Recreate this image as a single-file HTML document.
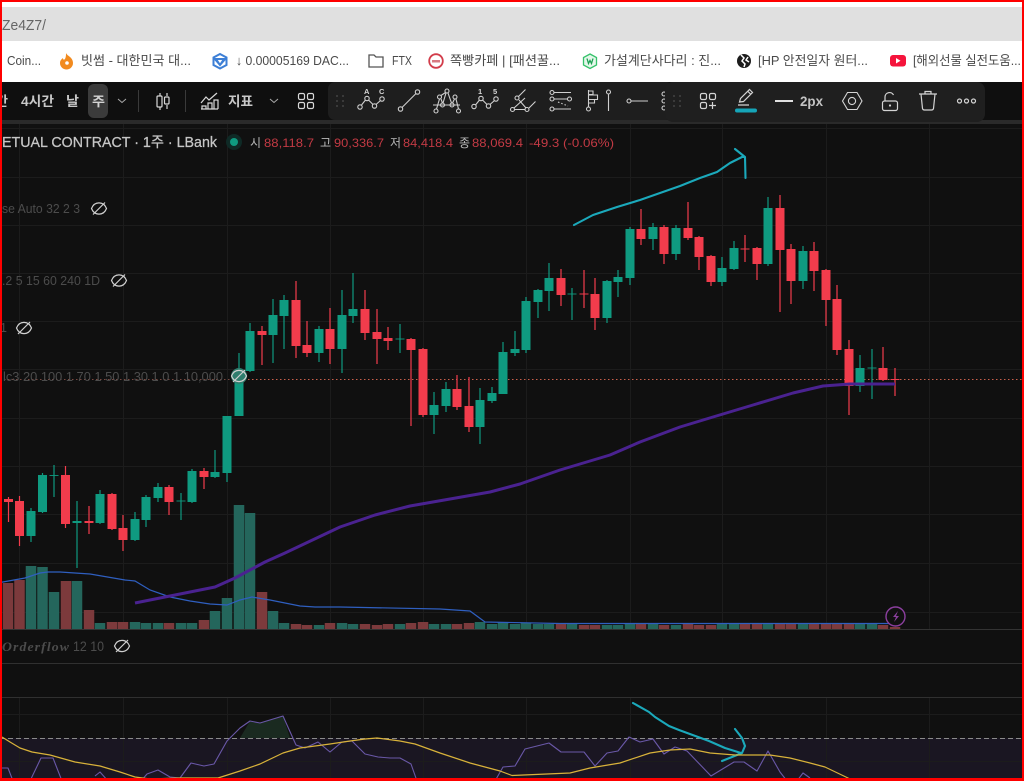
<!DOCTYPE html>
<html lang="ko">
<head>
<meta charset="utf-8">
<title>Chart</title>
<style>
html,body{margin:0;padding:0;background:#101010;width:1024px;height:781px;overflow:hidden}
svg{display:block;font-family:"Liberation Sans","Noto Sans CJK KR",sans-serif}
</style>
</head>
<body>
<svg width="1024" height="781" viewBox="0 0 1024 781" xmlns="http://www.w3.org/2000/svg">
<!-- base -->
<rect width="1024" height="781" fill="#101010"/>
<rect x="0" y="0" width="1024" height="41" fill="#fff"/>
<rect x="0" y="7" width="1024" height="34" fill="#e0e0e0"/>
<rect x="0" y="41" width="1024" height="41" fill="#fff"/>
<rect x="0" y="82" width="1024" height="38" fill="#0f0f0f"/>
<rect x="0" y="120" width="1024" height="4" fill="#2a2a2a"/>

<text x="2" y="30" font-size="15" fill="#666" textLength="44" lengthAdjust="spacingAndGlyphs">Ze4Z7/</text>

<!-- bookmarks -->
<g font-size="13" fill="#4a4a4a">
<text x="7" y="65" textLength="34" lengthAdjust="spacingAndGlyphs">Coin...</text>
<text x="81" y="65" textLength="110" lengthAdjust="spacingAndGlyphs">빗썸 - 대한민국 대...</text>
<text x="236" y="65" textLength="113" lengthAdjust="spacingAndGlyphs">↓ 0.00005169 DAC...</text>
<text x="392" y="65" textLength="20" lengthAdjust="spacingAndGlyphs">FTX</text>
<text x="450" y="65" textLength="110" lengthAdjust="spacingAndGlyphs">쪽빵카페 | [패션꿀...</text>
<text x="604" y="65" textLength="117" lengthAdjust="spacingAndGlyphs">가설계단사다리 : 진...</text>
<text x="758" y="65" textLength="110" lengthAdjust="spacingAndGlyphs">[HP 안전일자 원터...</text>
<text x="913" y="65" textLength="108" lengthAdjust="spacingAndGlyphs">[해외선물 실전도움...</text>
</g>
<!-- favicons -->
<path d="M66 53c1 3 7 4 7 10a6.500 6.500 0 0 1-13 0c0-3 2-4 3-5 0 2 1 2 2 1 1-2 1-4 1-6z" fill="#f28a1e"/>
<circle cx="67" cy="63" r="1.800" fill="#fff"/>
<g fill="none" stroke="#3d7fd6" stroke-width="2"><path d="M220 54l6.500 3.500v7.500l-6.500 3.500-6.500-3.500v-7.500z"/><path d="M216 59h8l-4 6zM213.500 57.500l6.500 7.500 6.500-7.500"/></g>
<path d="M369 55h5l2 2h7v10h-14z" fill="none" stroke="#555" stroke-width="1.300"/>
<circle cx="436" cy="61" r="6.800" fill="#fff" stroke="#d23c4a" stroke-width="1.800"/><rect x="432" y="60" width="8" height="2.500" fill="#d87a82"/>
<path d="M590 54l6.500 3.500v7.500l-6.500 3.500-6.500-3.500v-7.500z" fill="#e4f7ea" stroke="#35c26a" stroke-width="1.300"/><path d="M587 58.500l1.500 5 1.500-3 1.500 3 1.500-5" fill="none" stroke="#1ba052" stroke-width="1.300"/>
<circle cx="744" cy="61" r="7" fill="#1c1c1c"/><path d="M741 55l3 3-2 3 3 3-1 3M748 57l-2 3 3 2" fill="none" stroke="#fff" stroke-width="1.500"/>
<rect x="890" y="55" width="16" height="11.500" rx="3" fill="#f5143c"/><path d="M896 58v5.500l4.500-2.700z" fill="#fff"/>

<!-- toolbar text -->
<g font-size="13.500" font-weight="700" fill="#c8c8c8">
<text x="-4" y="106" textLength="12" lengthAdjust="spacingAndGlyphs">간</text>
<text x="21" y="106" textLength="33" lengthAdjust="spacingAndGlyphs">4시간</text>
<text x="66" y="106" textLength="13" lengthAdjust="spacingAndGlyphs">날</text>
</g>
<rect x="88" y="84" width="20" height="34" rx="6" fill="#3b3b3b"/>
<text x="92" y="106" font-size="13" font-weight="700" fill="#d4d4d4" textLength="13" lengthAdjust="spacingAndGlyphs">주</text>
<path d="M118 99l4 3.500 4-3.500M270 99l4 3.500 4-3.500" fill="none" stroke="#aaa" stroke-width="1"/>
<path d="M138.500 90v22M185.500 90v22" stroke="#3a3a3a" stroke-width="1"/>
<!-- candle icon -->
<g fill="none" stroke="#d8d8d8" stroke-width="1.200">
<path d="M160 93v3M160 107v3M167 93v3M167 105v4"/>
<rect x="157" y="96" width="5" height="11" rx="1"/><rect x="164.500" y="97" width="4.500" height="7" rx="1"/>
<!-- indicators -->
<path d="M201 103l5-6 3 3 8-7M201 109h17M202 109v-3h4v3M208 109v-6h4v6M214 109v-9h4v9"/>
<!-- grid -->
<rect x="298.500" y="93.500" width="6" height="6" rx="1.500"/><rect x="307.500" y="93.500" width="6" height="6" rx="1.500"/><rect x="298.500" y="102.500" width="6" height="6" rx="1.500"/><rect x="307.500" y="102.500" width="6" height="6" rx="1.500"/>
</g>
<text x="228" y="106" font-size="13.500" font-weight="700" fill="#c8c8c8" textLength="25" lengthAdjust="spacingAndGlyphs">지표</text>

<!-- floating toolbars -->
<rect x="328" y="82" width="345" height="38" rx="7" fill="#1e1e1e"/>
<g fill="none" stroke="#cfcfcf" stroke-width="1.100"><circle cx="664" cy="94" r="2"/><circle cx="664" cy="101" r="2"/><circle cx="664" cy="108" r="2"/></g>
<rect x="665" y="82" width="320" height="40" rx="8" fill="#1f1f1f"/>
<g fill="#444"><circle cx="337" cy="96" r="1"/><circle cx="343" cy="96" r="1"/><circle cx="337" cy="101" r="1"/><circle cx="343" cy="101" r="1"/><circle cx="337" cy="106" r="1"/><circle cx="343" cy="106" r="1"/>
<circle cx="674" cy="96" r="1"/><circle cx="680" cy="96" r="1"/><circle cx="674" cy="101" r="1"/><circle cx="680" cy="101" r="1"/><circle cx="674" cy="106" r="1"/><circle cx="680" cy="106" r="1"/></g>

<g fill="none" stroke="#cfcfcf" stroke-width="1.100">
<!-- XABCD -->
<circle cx="360" cy="107" r="2.200"/><circle cx="367" cy="98.500" r="2.200"/><circle cx="374.500" cy="106" r="2.200"/><circle cx="382" cy="99" r="2.200"/>
<path d="M361.500 105l4-5M368.500 100l4.500 4.500M376 104.500l4.500-4"/>
<!-- line -->
<circle cx="400.500" cy="109" r="2.200"/><circle cx="417.500" cy="92" r="2.200"/><path d="M402 107.500l14-14"/>
<!-- pattern -->
<circle cx="436" cy="111" r="2"/><circle cx="439.500" cy="97" r="2"/><circle cx="447" cy="91" r="2"/><circle cx="455" cy="97" r="2"/><circle cx="458.500" cy="111" r="2"/><circle cx="442.500" cy="105" r="2"/><circle cx="452" cy="105" r="2"/>
<path d="M433 105h27M436.500 109l3-10M441 99l1.500 4M441 95.500l4.500-3M448 93l3.500 10M446 93l-3 10M454.500 99l-2 4M456 99l2.500 10"/>
<!-- 15 -->
<circle cx="474" cy="106.500" r="2.200"/><circle cx="481" cy="98.500" r="2.200"/><circle cx="488.500" cy="106" r="2.200"/><circle cx="496" cy="99" r="2.200"/>
<path d="M475.500 105l4-5M482.500 100l4.500 4.500M490 104.500l4.500-4"/>
<!-- fork -->
<circle cx="517" cy="98" r="2"/><circle cx="512.500" cy="109.500" r="2"/><circle cx="527" cy="109.500" r="2"/>
<path d="M518.500 96.500l7-7M519 100l7 8M514.500 109.500h10.500M514 108l11-10M529 108l6.500-6.500"/>
<!-- levels -->
<circle cx="552" cy="92.500" r="2"/><circle cx="552" cy="99" r="2"/><circle cx="569.500" cy="99" r="2"/><circle cx="552" cy="109" r="2"/>
<path d="M554 92.500h17M554 99h13.500M554 109h17"/><path d="M558 102l10 4" stroke-dasharray="1.500 2"/>
<!-- bars pin -->
<circle cx="588.500" cy="109" r="2"/><path d="M588.500 107V90M588.500 91h4.500v3.500h-4.500M588.500 95h9v4.500h-9M588.500 99.500h6v3.500h-6"/>
<circle cx="608.500" cy="92" r="2"/><path d="M608.500 94v17"/>
<!-- hline -->
<circle cx="629" cy="101" r="2"/><path d="M631 101h17"/>
</g>
<g fill="#d8d8d8" font-size="7.500" font-weight="700">
<text x="364" y="94">A</text><text x="379" y="94">C</text><text x="478" y="94">1</text><text x="493" y="94">5</text>
</g>

<g fill="none" stroke="#d4d4d4" stroke-width="1.200">
<rect x="700.500" y="93.500" width="6" height="6" rx="1.500"/><rect x="709.500" y="93.500" width="6" height="6" rx="1.500"/><rect x="700.500" y="102.500" width="6" height="6" rx="1.500"/>
<path d="M709 105.500h7M712.500 102v7"/>
<path d="M739.500 102l1-3.500 9-9 3 3-9 9zM747.500 91l3 3M738 105h11"/>
<path d="M842.500 101l5-8.500h9.500l5 8.500-5 8.500h-9.500z" stroke-width="1.100"/><circle cx="852" cy="101" r="3.600" stroke-width="1.100"/>
<rect x="882.500" y="101" width="15" height="9.500" rx="2"/><path d="M885 101v-4a4.500 4.500 0 0 1 8.500-2"/>
<path d="M919 94h18M925 94v-2.500h6V94M921 94l1.500 14.500a2 2 0 0 0 2 1.500h7a2 2 0 0 0 2-1.500L935 94"/>
<circle cx="959.500" cy="101" r="2"/><circle cx="966.500" cy="101" r="2"/><circle cx="973.500" cy="101" r="2"/>
</g>
<circle cx="890" cy="105.500" r="1.100" fill="#d4d4d4"/>
<rect x="735" y="108.500" width="22" height="4" rx="2" fill="#16a5b8"/>
<rect x="775" y="100" width="18" height="2" fill="#e0e0e0"/>
<text x="800" y="106" font-size="13.500" font-weight="700" fill="#c4c4c4" textLength="23" lengthAdjust="spacingAndGlyphs">2px</text>

<!-- chart pane separators & grid -->
<rect x="0" y="738" width="1024" height="43" fill="#1a1622"/>
<g stroke="#1c1c1c" stroke-width="1">
<path d="M19.500 124V629M123.500 124V629M227.500 124V629M330.500 124V629M423.500 124V629M526.500 124V629M630.500 124V629M722.500 124V629M826.500 124V629M929.500 124V629"/>
<path d="M19.500 697V781M123.500 697V781M227.500 697V781M330.500 697V781M423.500 697V781M526.500 697V781M630.500 697V781M722.500 697V781M826.500 697V781M929.500 697V781"/>
<path d="M0 128.500H1024M0 177.500H1024M0 225.500H1024M0 273.500H1024M0 321.500H1024M0 369.500H1024M0 418.500H1024M0 466.500H1024M0 514.500H1024M0 563.500H1024M0 612.500H1024M0 714.500H1024M0 761.500H1024"/>
</g>
<path d="M0 629.500H1024" stroke="#333" stroke-width="1"/>
<path d="M0 663.500H1024M0 697.500H1024" stroke="#303030" stroke-width="1"/>
<path d="M0 738.500H1024" stroke="#8a8a8a" stroke-width="1" stroke-dasharray="5 3"/>
<path d="M240 738L250 721 260 723 283 716 290 738z" fill="#1a2a20"/>

<!-- price line -->
<path d="M0 379.500H240" stroke="#7a4a42" stroke-width="1" stroke-dasharray="1.500 2.500"/>
<path d="M240 379.500H1024" stroke="#c8604c" stroke-width="1" stroke-dasharray="1.500 2.500"/>

<!-- volume -->
<path fill="none" stroke="#7c3a3c" stroke-width="10.500" d="M8 583V629M19.500 580V629M66 581V629M89 610V629M112 622V629M123 622V629M169 623V629M204 620V629M262 592V629M296 624V629M307 625V629M330 623V629M365 624V629M377 625V629M388 624V629M411 623V629M423 622V629M457 624V629M469 623V629M561 624V629M584 625V629M595 625V629M641 624V629M664 625V629M688 624V629M699 625V629M711 625V629M745 624V629M757 624V629M780 623V629M791 624V629M814 624V629M826 624V629M837 624V629M849 623V629M883 625V629M895 627V629"/>
<path fill="none" stroke="#24665c" stroke-width="10.500" d="M31 566V629M42.500 567V629M54 592V629M77 581V629M100 623V629M135 622V629M146 623V629M158 623V629M181 623V629M192 623V629M215 611V629M227 598V629M239 505V629M250 513V629M273 611V629M284 623V629M319 625V629M342 623V629M353 624V629M400 624V629M434 624V629M446 624V629M480 622V629M492 624V629M503 622V629M515 624V629M526 623V629M538 624V629M549 624V629M572 624V629M607 625V629M618 625V629M630 624V629M653 624V629M676 625V629M722 624V629M734 624V629M768 624V629M803 624V629M860 624V629M872 624V629"/>
<path d="M0 582.500L25 578 40 573 48 572 60 572 90 574 125 580 135 581 150 590 170 597 190 601 210 604 227 605 240 600 252 597 270 600 300 606 315 607 340 607 440 609 470 611 485 622 560 623.500 890 623.500" fill="none" stroke="#2f5fc0" stroke-width="1.200"/>

<!-- wicks -->
<path fill="none" stroke="#0f9a80" stroke-width="1.200" d="M31 508V542M42.500 473V513M54 465V497M77 501V568M100 490V524M135 512V541M146 495V527M158 483V502M181 493V520M192 469V503M215 450V478M227 416V482M239 353V416M250 323V372M273 299V363M284 295V349M319 326V362M342 290V373M353 273V323M400 324V353M434 392V434M446 382V412M480 388V444M492 387V403M503 342V394M515 331V356M526 297V353M538 289V318M549 263V311M572 288V320M607 280V323M618 270V297M630 227V285M653 223V250M676 225V260M722 257V286M734 241V270M768 197V266M803 246V289M860 355V392M872 349V399"/>
<path fill="none" stroke="#f23c4c" stroke-width="1.200" d="M8.500 497V522M19.500 496V546M65.500 466V528M89 506V534M112 493V530M123 515V551M169 485V515M204 468V489M262 326V365M296 281V358M307 321V357M330 308V364M365 290V340M377 309V364M388 327V350M411 338V426M423 348V417M457 375V410M469 377V432M561 269V306M584 270V308M595 278V330M641 209V245M664 225V264M688 202V240M699 236V270M711 255V286M745 235V262M757 247V280M780 195V312M791 244V304M814 242V291M826 269V326M837 285V355M849 340V415M883 347V381M895 368V396"/>
<!-- bodies -->
<path fill="none" stroke="#0f9a80" stroke-width="9" d="M31 511V536M42.500 475V512M77 521V523M100 494V523M135 519V540M146 497V520M158 487V498M192 471V502M215 472V477M227 416V473M239 371V416M250 331V371M273 315V335M284 300V316M319 329V353M342 315V349M353 309V316M434 405V415M446 389V406M480 400V427M492 393V401M503 352V394M515 349V353M526 301V350M538 290V302M549 278V291M607 281V318M618 277V282M630 229V278M653 227V239M676 228V254M722 268V282M734 248V269M768 208V264M803 251V281M860 368V386"/>
<path fill="none" stroke="#0f9a80" stroke-width="9" d="M54 475V476M181 500.500V501.500M400 338.500V339.500M572 293.500V294.500M872 367.500V368.500" opacity=".9"/>
<path fill="none" stroke="#f23c4c" stroke-width="9" d="M8.500 499V502M19.500 501V536M65.500 475V524M89 521V523M112 494V529M123 528V540M169 487V502M204 471V477M262 331V335M296 300V346M307 345V353M330 329V349M365 309V333M377 332V339M388 338V341M411 339V350M423 349V415M457 389V407M469 406V427M561 278V295M595 294V318M641 229V239M664 227V254M688 228V238M699 237V257M711 256V282M757 248V264M780 208V250M791 249V281M814 251V271M826 270V300M837 299V350M849 349V386M883 368V380"/>
<path fill="none" stroke="#f23c4c" stroke-width="9" d="M584 293.500V294.500M745 248.500V249.500M895 379V380"/>

<!-- MA purple -->
<path d="M135 603L170 596 215 587 235 578 265 562 285 553 340 527 375 515 410 506 450 499 490 492 520 484 560 470 610 455 640 442 680 427 713 417 753 405 793 393 823 386 850 384 895 384" fill="none" stroke="#4a2290" stroke-width="3" stroke-linejoin="round"/>

<!-- cyan drawings -->
<g fill="none" stroke="#1ba9bb" stroke-width="2.100" stroke-linecap="round" stroke-linejoin="round">
<path d="M574 225L593 215 617 207 640 200 680 186 700 178 717 172 730 163 742 157 745 157 735 149M745 157L745.500 178"/>
<path d="M633 703L649 712 655 717 669 726 679 730 709 741 725 748 741 753M735 729L742 738 745 746 742 753 722 761"/>
</g>

<!-- RSI -->
<g fill="none" stroke-linejoin="round">
<path d="M0 768H8L13 781M30 781L41 758H53L62 781M95 776L100 772 108 781M141 781L147 774 158 770 170 777 180 778 191 763 204 766 214 764 227 741 240 728 250 721 260 723 283 716 296 745 305 748 318 742 330 752 342 742 352 741 365 754 378 757 390 758 400 758 411 764 417 781M495 781L503 767 515 766 525 749 549 743 561 752 584 752 595 766 607 753 618 751 629 737 640 742 653 739 664 754 675 747 687 751 711 776 734 762 744 762 757 771 768 751 780 772 787 781M797 781L803 773 810 778" stroke="#6a58a8" stroke-width="1.100"/>
<path d="M2 737L10 742 20 748 32 752 50 755 75 762 100 766 120 772 135 777 150 779 180 778 218 778 240 771 260 764 283 753 300 748 330 744 350 741 365 739 377 738 400 741 415 744 440 753 470 763 500 771 512 775.500 570 773 590 768 620 763 650 753 670 750 690 749 710 753 735 755 770 755 790 758 810 763 825 767 848 778 855 781" stroke="#d8b23a" stroke-width="1.200"/>
</g>

<!-- legends -->
<text x="2" y="213" font-size="12.500" fill="#4c4c4c" textLength="78" lengthAdjust="spacingAndGlyphs">se Auto 32 2 3</text>
<text x="2" y="285" font-size="12.500" fill="#4c4c4c" textLength="98" lengthAdjust="spacingAndGlyphs">.2 5 15 60 240 1D</text>
<text x="0" y="332" font-size="12.500" fill="#4c4c4c">1</text>
<text x="3" y="381" font-size="12.500" fill="#4c4c4c" textLength="220" lengthAdjust="spacingAndGlyphs">lc3 20 100 1 70 1 50 1 30 1 0 1 10,000</text>
<text x="2" y="651" font-size="12.500" font-family="Liberation Serif,serif" font-style="italic" font-weight="700" fill="#4c4c4c" letter-spacing="1" textLength="68" lengthAdjust="spacingAndGlyphs">Orderflow</text>
<text x="73" y="651" font-size="13.500" fill="#4c4c4c" textLength="31" lengthAdjust="spacingAndGlyphs">12 10</text>

<!-- eyes -->
<g fill="none" stroke="#cfcfcf" stroke-width="1.200">
<g><path d="M91.500 208.500c3-7.500 12-7.500 15 0-3 7.500-12 7.500-15 0z"/><path d="M93 214.500l12-12M96 211.500l6-6"/></g>
<g><path d="M111.500 280.500c3-7.500 12-7.500 15 0-3 7.500-12 7.500-15 0z"/><path d="M113 286.500l12-12M116 283.500l6-6"/></g>
<g><path d="M16.500 328c3-7.500 12-7.500 15 0-3 7.500-12 7.500-15 0z"/><path d="M18 334l12-12M21 331l6-6"/></g>
<g><circle cx="239" cy="376" r="8" fill="#2f7d6d" stroke="none"/><path d="M231.500 376c3-7.500 12-7.500 15 0-3 7.500-12 7.500-15 0z"/><path d="M233 382l12-12M236 379l6-6"/></g>
<g><path d="M114.500 646c3-7.500 12-7.500 15 0-3 7.500-12 7.500-15 0z"/><path d="M116 652l12-12M119 649l6-6"/></g>
</g>

<!-- title -->
<text x="2" y="147" font-size="14.500" fill="#c6c6c6" stroke="#c6c6c6" stroke-width=".25" textLength="215" lengthAdjust="spacingAndGlyphs">ETUAL CONTRACT · 1주 · LBank</text>
<circle cx="234" cy="142" r="8" fill="#0f2a26"/><circle cx="234" cy="142" r="4" fill="#0f9a80"/>
<g font-size="12">
<text x="250" y="147" fill="#b9b9b9">시</text><text x="264" y="147" fill="#c23a44" textLength="50" lengthAdjust="spacingAndGlyphs">88,118.7</text>
<text x="320" y="147" fill="#b9b9b9">고</text><text x="334" y="147" fill="#c23a44" textLength="50" lengthAdjust="spacingAndGlyphs">90,336.7</text>
<text x="390" y="147" fill="#b9b9b9">저</text><text x="403" y="147" fill="#c23a44" textLength="50" lengthAdjust="spacingAndGlyphs">84,418.4</text>
<text x="459" y="147" fill="#b9b9b9">종</text><text x="472" y="147" fill="#c23a44" textLength="51" lengthAdjust="spacingAndGlyphs">88,069.4</text>
<text x="529" y="147" fill="#c23a44" textLength="85" lengthAdjust="spacingAndGlyphs">-49.3 (-0.06%)</text>
</g>

<!-- lightning -->
<circle cx="895.500" cy="616.500" r="9.500" fill="#101010" stroke="#8b3f9e" stroke-width="1.400"/>
<path d="M898 611l-5 6h3l-2 5 5-6h-3z" fill="#8b3f9e"/>

<!-- red frame -->
<rect x="0" y="0" width="1024" height="2" fill="#f00"/>
<rect x="0" y="0" width="2" height="781" fill="#f00"/>
<rect x="1022" y="0" width="2" height="781" fill="#f00"/>
<rect x="0" y="778" width="1024" height="3" fill="#f00"/>
</svg>
</body>
</html>
